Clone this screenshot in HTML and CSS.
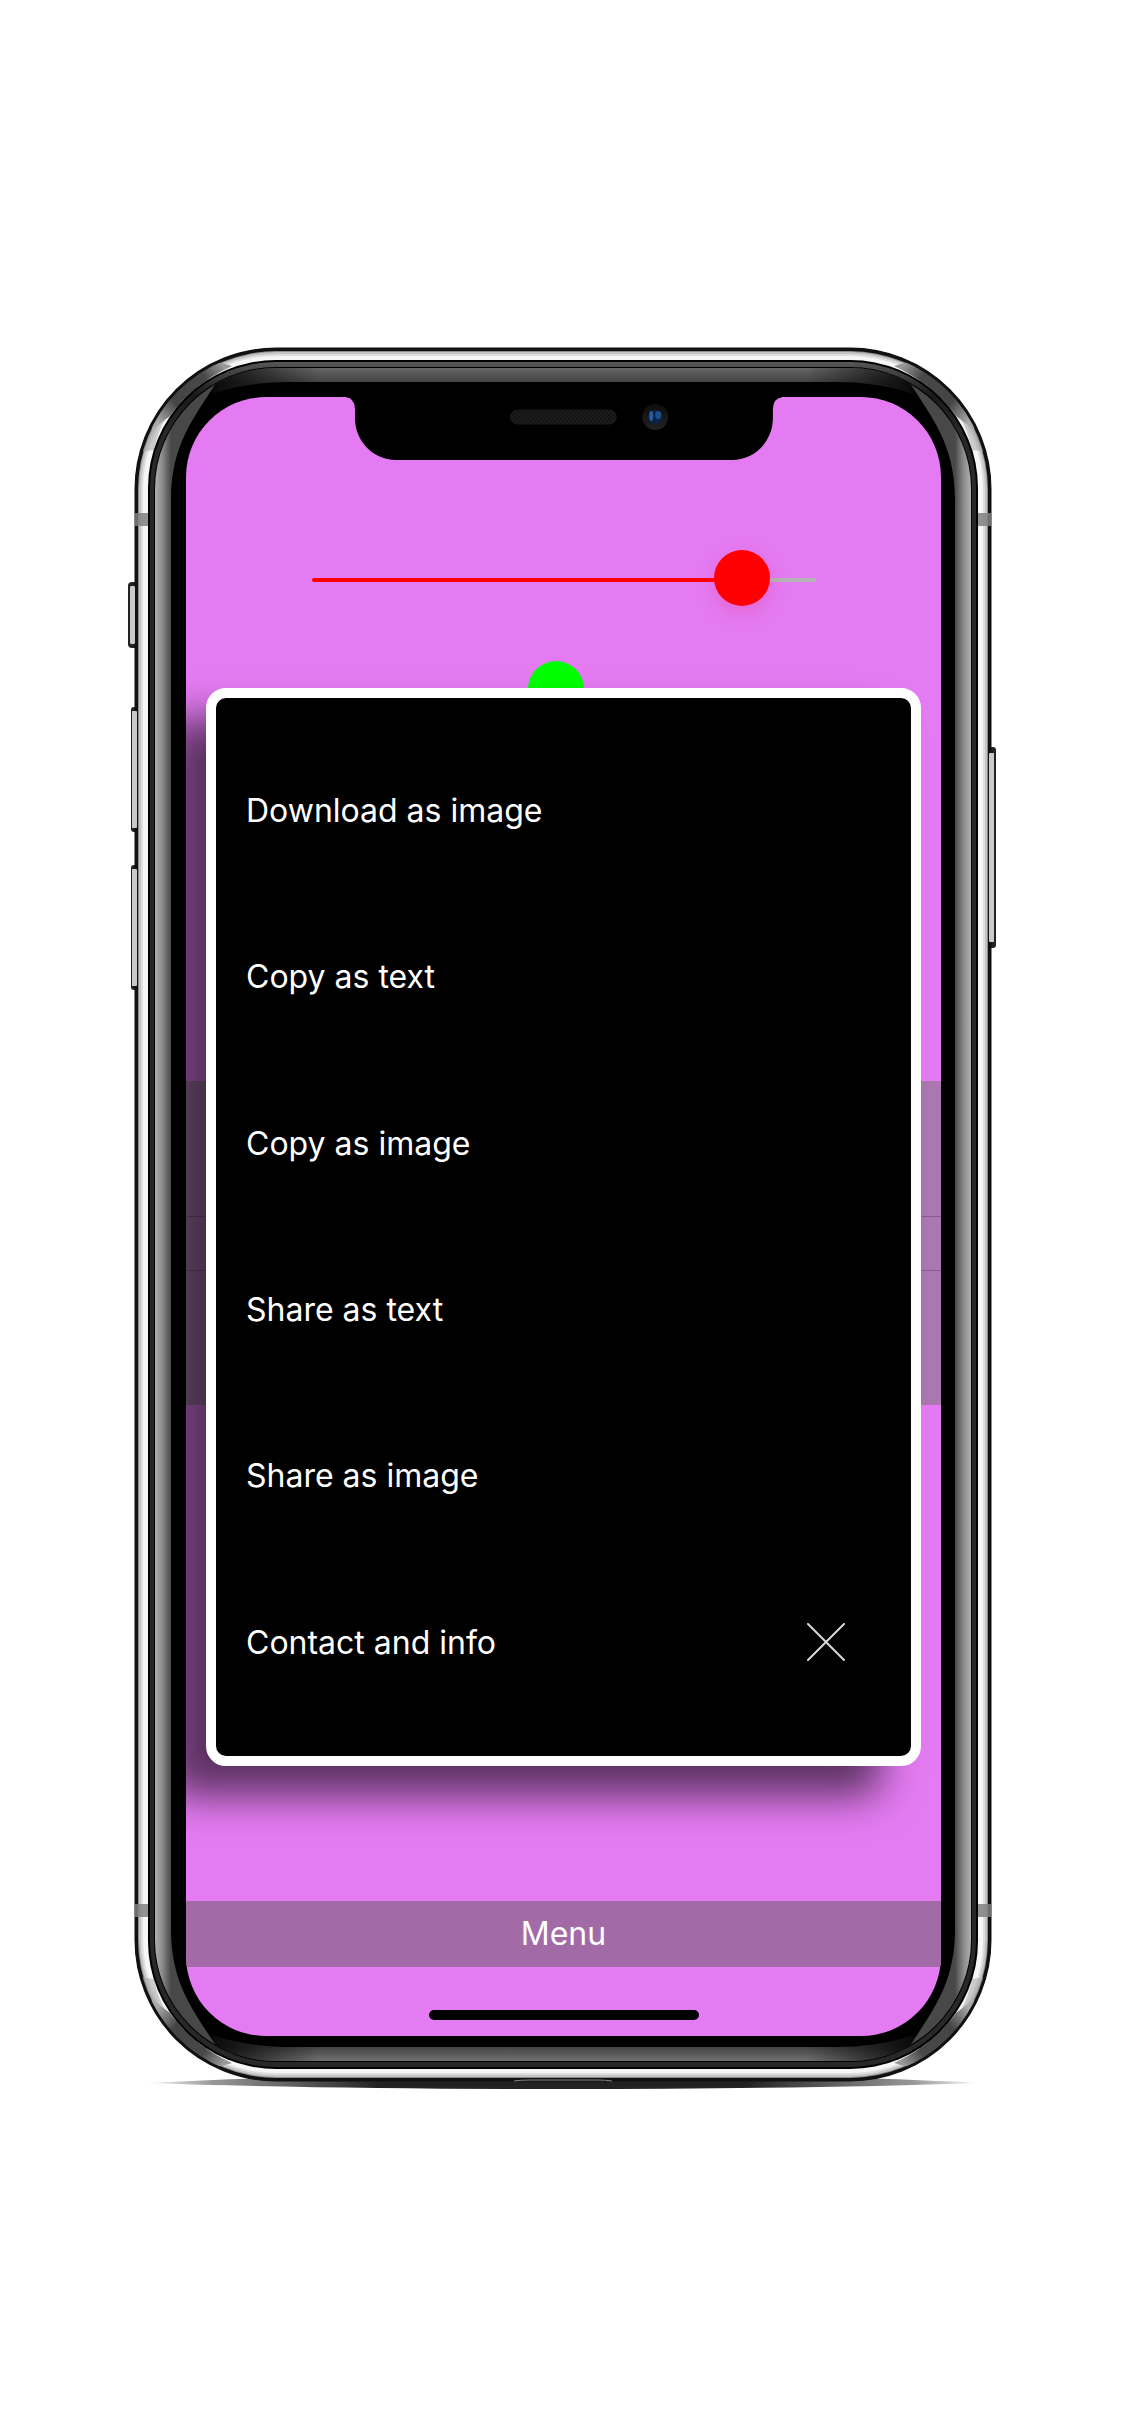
FILE: index.html
```html
<!DOCTYPE html>
<html lang="en">
<head>
<meta charset="utf-8">
<meta name="viewport" content="width=device-width, initial-scale=1">
<title>Colour picker</title>
<link rel="stylesheet" href="styles.css">
</head>
<body>
<main class="phone">
  <svg class="frame" viewBox="128 347 869 1742" preserveAspectRatio="none" aria-hidden="true">
    <defs>
      <linearGradient id="ring" gradientUnits="userSpaceOnUse" x1="0" y1="360" x2="0" y2="430">
        <stop offset="0" stop-color="#5c5c5c"/><stop offset=".12" stop-color="#4a4a4a"/><stop offset=".5" stop-color="#1a1a1a"/><stop offset="1" stop-color="#282828"/>
      </linearGradient>
      <linearGradient id="left" gradientUnits="userSpaceOnUse" x1="155" y1="0" x2="171" y2="0">
        <stop offset="0" stop-color="#b0b0b0"/><stop offset=".45" stop-color="#8c8c8c"/><stop offset="1" stop-color="#484848"/>
      </linearGradient>
      <linearGradient id="right" gradientUnits="userSpaceOnUse" x1="971" y1="0" x2="955" y2="0">
        <stop offset="0" stop-color="#b0b0b0"/><stop offset=".45" stop-color="#8c8c8c"/><stop offset="1" stop-color="#484848"/>
      </linearGradient>
      <linearGradient id="top" gradientUnits="userSpaceOnUse" x1="0" y1="368" x2="0" y2="383">
        <stop offset="0" stop-color="#666"/><stop offset="1" stop-color="#414141"/>
      </linearGradient>
      <linearGradient id="bottom" gradientUnits="userSpaceOnUse" x1="0" y1="2047" x2="0" y2="2061">
        <stop offset="0" stop-color="#444"/><stop offset="1" stop-color="#707070"/>
      </linearGradient>
      <linearGradient id="fade" gradientUnits="userSpaceOnUse" x1="205" y1="0" x2="921" y2="0">
        <stop offset="0" stop-color="#000"/><stop offset=".02" stop-color="#000" stop-opacity=".8"/><stop offset=".16" stop-color="#000" stop-opacity="0"/>
        <stop offset=".84" stop-color="#000" stop-opacity="0"/><stop offset=".98" stop-color="#000" stop-opacity=".8"/><stop offset="1" stop-color="#000"/>
      </linearGradient>
      <linearGradient id="ground" gradientUnits="userSpaceOnUse" x1="145" y1="0" x2="981" y2="0">
        <stop offset="0" stop-color="#999" stop-opacity="0"/><stop offset=".08" stop-color="#999"/><stop offset=".28" stop-color="#222"/>
        <stop offset=".72" stop-color="#222"/><stop offset=".92" stop-color="#999"/><stop offset="1" stop-color="#999" stop-opacity="0"/>
      </linearGradient>
      <linearGradient id="facet" gradientUnits="userSpaceOnUse" x1="156" y1="420" x2="222" y2="364">
        <stop offset="0" stop-color="#aaa"/><stop offset=".3" stop-color="#444"/><stop offset=".75" stop-color="#484848"/><stop offset="1" stop-color="#999"/>
      </linearGradient>
      <clipPath id="steel"><rect x="137" y="350" width="852" height="1729" rx="139"/></clipPath>
      <clipPath id="glass"><rect x="155" y="368" width="816" height="1693" rx="121"/></clipPath>
      <g id="corner">
        <path fill="#a8a8a8" d="M139 452C143 420 158 396 176 380L190 388C172 404 159 424 154 450Z" opacity=".55"/>
        <path fill="url(#facet)" d="M150 408C164 385 186 370 204 358L232 366C206 378 186 394 170 416L152 430Z"/>
      </g>
    </defs>
    <path fill="url(#ground)" d="M145 2083Q260 2077 350 2077H776Q866 2077 981 2083Q800 2089 563 2089Q326 2089 145 2083Z"/>
    <g fill="#222">
      <rect x="128" y="582" width="12" height="66" rx="4"/>
      <rect x="131" y="707" width="9" height="125" rx="3"/>
      <rect x="131" y="865" width="9" height="125" rx="3"/>
      <rect x="986" y="747" width="10" height="201" rx="3"/>
    </g>
    <rect x="135" y="348" width="856" height="1733" rx="141" fill="#111"/>
    <g fill="#c9c9c9">
      <rect x="130" y="586" width="6" height="58" rx="2"/>
      <rect x="132" y="711" width="5" height="117" rx="1"/>
      <rect x="132" y="869" width="5" height="117" rx="1"/>
      <rect x="989" y="753" width="5" height="189" rx="1"/>
    </g>
    <g clip-path="url(#steel)">
      <rect x="138" y="351" width="850" height="1727" rx="138" fill="#8c8c8c"/>
      <rect x="139" y="352" width="848" height="1725" rx="137" fill="#c4c4c4"/>
      <rect x="141" y="354" width="844" height="1721" rx="135" fill="#dedede"/>
      <rect x="143" y="356" width="840" height="1717" rx="133" fill="#f6f6f6"/>
      <use href="#corner"/>
      <use href="#corner" transform="translate(1126 0) scale(-1 1)"/>
      <use href="#corner" transform="translate(0 2429) scale(1 -1)"/>
      <use href="#corner" transform="translate(1126 2429) scale(-1 -1)"/>
    </g>
    <rect x="136" y="349" width="854" height="1731" rx="140" fill="none" stroke="#111" stroke-width="3"/>
    <g fill="#c9c9c9">
      <rect x="130" y="586" width="5" height="58" rx="2"/>
      <rect x="132" y="711" width="5" height="117" rx="1"/>
      <rect x="132" y="869" width="5" height="117" rx="1"/>
      <rect x="989" y="753" width="5" height="189" rx="1"/>
    </g>
    <g fill="#808080" opacity=".85">
      <rect x="135" y="513" width="14" height="13"/><rect x="977" y="513" width="14" height="13"/>
      <rect x="135" y="1904" width="14" height="13"/><rect x="977" y="1904" width="14" height="13"/>
    </g>
    <rect x="148" y="360" width="830" height="1709" rx="128" fill="#000"/>
    <rect x="150" y="362" width="826" height="1705" rx="126" fill="url(#ring)"/>
    <rect x="154" y="367" width="818" height="1695" rx="122" fill="#000"/>
    <g clip-path="url(#glass)">
      <path fill="url(#top)" d="M205 368H921L913 394C888 385 860 382 836 382H290C266 382 238 385 213 394Z"/>
      <path fill="url(#bottom)" d="M205 2061H921L913 2035C888 2044 860 2047 836 2047H290C266 2047 238 2044 213 2035Z"/>
      <path fill="url(#fade)" d="M200 367H926V396H200ZM200 2035H926V2062H200Z"/>
      <path fill="url(#left)" d="M150 496V400L180 380H218C194 418 171 444 171 500V1929C171 1985 194 2011 218 2049H180L150 2030Z"/>
      <path fill="url(#right)" d="M976 496V400L946 380H908C932 418 955 444 955 500V1929C955 1985 932 2011 908 2049H946L976 2030Z"/>
    </g>
    <path fill="none" stroke="#888" d="M514 2081Q520 2080 530 2080H598Q606 2080 612 2081"/>
  </svg>

  <section class="screen">
    <svg class="notch" viewBox="344 397 439 63" aria-hidden="true">
      <defs>
        <pattern id="mesh" width="4" height="4" patternUnits="userSpaceOnUse">
          <rect width="4" height="4" fill="#121212"/><path d="M0 0h2v2H0zM2 2h2v2H2z" fill="#1e1e1e"/>
        </pattern>
        <linearGradient id="rim" x1="0" y1="0" x2="0" y2="1"><stop offset="0" stop-color="#0d0d0d"/><stop offset="1" stop-color="#222"/></linearGradient>
      </defs>
      <path d="M344 397Q354 398 354 409V418C354 441 372 460 395 460H732C755 460 773 441 773 418V409Q773 398 783 397Z"/>
      <rect x="510" y="410" width="106" height="14" rx="7" fill="url(#mesh)" stroke="#1a1a1a"/>
      <circle cx="655" cy="417" r="13" fill="url(#rim)"/>
      <circle cx="655" cy="417" r="7" fill="#0d2247"/>
      <ellipse cx="651" cy="416" rx="2" ry="5" fill="#245f9c"/>
      <ellipse cx="658" cy="415" rx="3" ry="4" fill="#1e4f8c"/>
    </svg>

    <div class="sliders">
      <input class="slider red" type="range" min="0" max="255" value="229" aria-label="Red" style="--fill: 89%">
      <input class="slider green" type="range" min="0" max="255" value="123" aria-label="Green" style="--fill: 48%">
    </div>

    <div class="values">
      <div class="value tall"></div>
      <div class="value"></div>
      <div class="value tall"></div>
    </div>

    <button class="menu-button" type="button">Menu</button>
    <div class="home-indicator"></div>

    <nav class="menu">
      <button class="item" type="button">Download as image</button>
      <button class="item" type="button">Copy as text</button>
      <button class="item" type="button">Copy as image</button>
      <button class="item" type="button">Share as text</button>
      <button class="item" type="button">Share as image</button>
      <div class="last-row">
        <button class="item" type="button">Contact and info</button>
        <button class="close" type="button" aria-label="Close">
          <svg width="40" height="40" viewBox="0 0 40 40" aria-hidden="true"><path d="M2 1L38 37M38 1L2 37" stroke="#d8d8d8" stroke-width="2" stroke-linecap="round"/></svg>
        </button>
      </div>
    </nav>
  </section>
</main>
</body>
</html>
```
FILE: styles.css
```css
* {
  box-sizing: border-box;
}

body {
  margin: 0;
  min-height: 100vh;
  display: grid;
  place-items: center;
  background: #fff;
  font-family: Inter, "Liberation Sans", sans-serif;
  font-size: 32px;
  font-weight: 400;
  line-height: 40px;
}

button {
  margin: 0;
  padding: 0;
  border: 0;
  background: none;
  color: #fff;
  font: inherit;
  cursor: pointer;
}

.phone {
  display: grid;
  width: 100%;
  max-width: 869px;
  min-height: 1742px;
}

.frame,
.screen {
  grid-area: 1 / 1;
}

.frame {
  width: 100%;
  height: 100%;
}

.screen {
  position: relative;
  display: flex;
  flex-direction: column;
  margin: 50px 56px 53px 58px;
  overflow: hidden;
  border-radius: 80px;
  background: #e47bf2;
}

.notch {
  align-self: center;
  width: 58%;
  height: 63px;
}

/* Colour sliders */
.sliders {
  display: flex;
  flex-direction: column;
  align-items: center;
  gap: 55px;
  padding-top: 92px;
}

.slider {
  --color: #f00;
  appearance: none;
  width: 504px;
  max-width: 67%;
  height: 56px;
  margin: 0;
  background: none;
}

.slider.green {
  --color: #0f0;
}

.slider::-webkit-slider-runnable-track {
  height: 4px;
  border-radius: 2px;
  background: linear-gradient(to right, var(--color) var(--fill), #b5b5b5 var(--fill));
}

.slider::-webkit-slider-thumb {
  appearance: none;
  width: 56px;
  height: 56px;
  margin-top: -28px;
  border-radius: 50%;
  background: var(--color);
  box-shadow: 0 6px 18px rgba(230, 60, 150, 0.35);
}

.slider.green::-webkit-slider-thumb {
  box-shadow: none;
}

/* Value rows behind the menu */
.values {
  margin-top: 362px;
  background: #aa77b0;
}

.value {
  height: 54px;
}

.value.tall {
  height: 135px;
}

.value + .value {
  border-top: 1px solid #8a5a94;
}

.menu-button {
  height: 66px;
  margin-top: auto;
  background: #a26ba7;
}

.home-indicator {
  align-self: center;
  width: 270px;
  height: 10px;
  margin: 43px 0 16px;
  border-radius: 5px;
  background: #000;
}

/* Pop-up menu */
.menu {
  position: absolute;
  inset: 291px 20px 270px;
  display: grid;
  grid-auto-rows: 1fr;
  padding: 30px;
  border: 10px solid #fff;
  border-radius: 20px;
  background: #000;
  box-shadow: -40px 30px 40px rgba(0, 0, 0, 0.6);
}

.item {
  text-align: left;
}

.last-row {
  display: flex;
}

.last-row .item {
  flex: 1;
}

.close {
  display: grid;
  place-items: center;
  width: 110px;
}
```
